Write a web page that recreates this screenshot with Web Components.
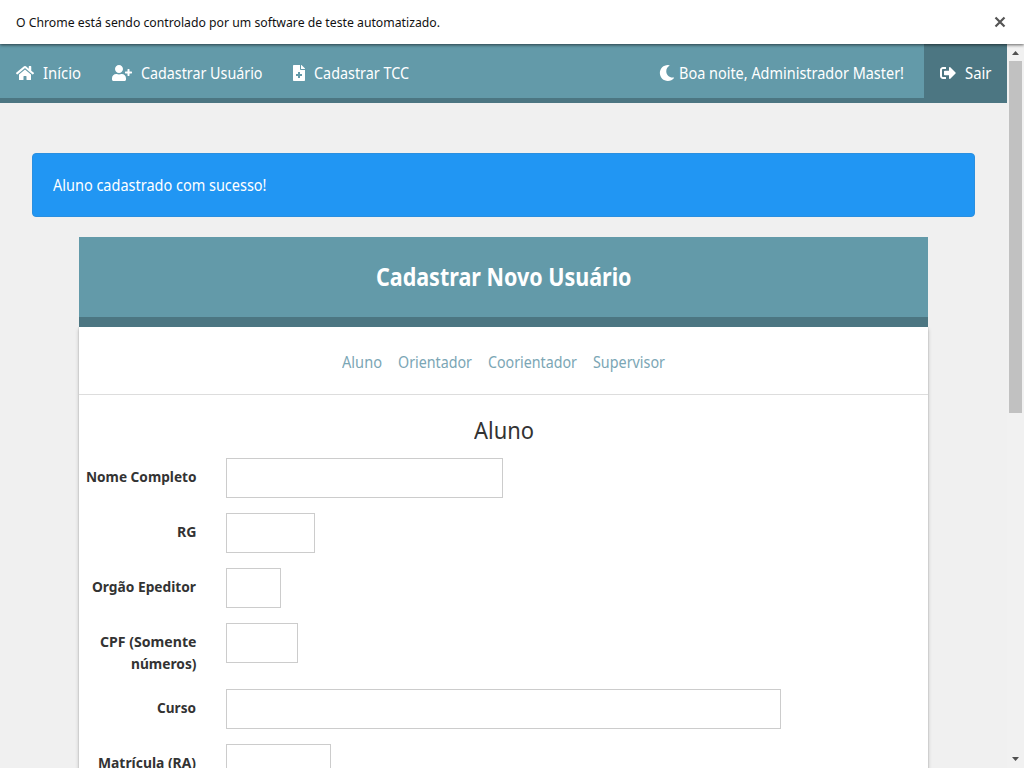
<!DOCTYPE html>
<html lang="pt-BR">
<head>
<meta charset="utf-8">
<title>Cadastrar Novo Usuário</title>
<style>
html,body{margin:0;height:100%;overflow:hidden}
body{background:#f0f0f0;color:#333;font:15.5px/22px "Noto Sans","Open Sans",sans-serif}
</style>
</head>
<body>
<app-window></app-window>
<script>
const define = (name, html, setup) => customElements.define(name, class extends HTMLElement {
  connectedCallback() {
    if (this.shadowRoot) return;
    const t = document.createElement('template');
    t.innerHTML = html;
    this.attachShadow({mode: 'open'}).append(t.content.cloneNode(true));
    if (setup) setup(this, this.shadowRoot);
  }
});

// Icon set: [viewBox width, path]
const ICONS = {
  home: [576, 'M280.37 148.26L96 300.11V464a16 16 0 0 0 16 16l112.06-.29a16 16 0 0 0 15.92-16V368a16 16 0 0 1 16-16h64a16 16 0 0 1 16 16v95.64a16 16 0 0 0 16 16.05L464 480a16 16 0 0 0 16-16V300L295.67 148.26a12.19 12.19 0 0 0-15.3 0zM571.6 251.47L488 182.56V44.05a12 12 0 0 0-12-12h-56a12 12 0 0 0-12 12v72.61L318.47 43a48 48 0 0 0-61 0L4.34 251.47a12 12 0 0 0-1.6 16.9l25.5 31A12 12 0 0 0 45.15 301l235.22-193.74a12.19 12.19 0 0 1 15.3 0L530.9 301a12 12 0 0 0 16.9-1.6l25.5-31a12 12 0 0 0-1.7-16.93z'],
  userPlus: [640, 'M624 208h-64v-64c0-8.8-7.2-16-16-16h-32c-8.8 0-16 7.2-16 16v64h-64c-8.8 0-16 7.2-16 16v32c0 8.8 7.2 16 16 16h64v64c0 8.8 7.2 16 16 16h32c8.8 0 16-7.2 16-16v-64h64c8.8 0 16-7.2 16-16v-32c0-8.8-7.2-16-16-16zm-400 48c70.7 0 128-57.3 128-128S294.7 0 224 0 96 57.3 96 128s57.3 128 128 128zm89.6 32h-16.7c-22.2 10.2-46.9 16-72.9 16s-50.6-5.8-72.9-16h-16.7C60.2 288 0 348.2 0 422.4V464c0 26.5 21.5 48 48 48h352c26.5 0 48-21.5 48-48v-41.6c0-74.2-60.2-134.4-134.4-134.4z'],
  file: [384, 'M377 105L279.1 7c-4.5-4.5-10.6-7-17-7H256v128h128v-6.1c0-6.3-2.5-12.4-7-16.9zm-153 31V0H24C10.7 0 0 10.7 0 24v464c0 13.3 10.7 24 24 24h336c13.3 0 24-10.7 24-24V160H248c-13.2 0-24-10.8-24-24zm64 160v48c0 4.4-3.6 8-8 8h-56v56c0 4.4-3.6 8-8 8h-48c-4.4 0-8-3.6-8-8v-56h-56c-4.4 0-8-3.6-8-8v-48c0-4.4 3.6-8 8-8h56v-56c0-4.4 3.6-8 8-8h48c4.4 0 8 3.6 8 8v56h56c4.4 0 8 3.6 8 8z'],
  moon: [512, 'M283.211 512c78.962 0 151.079-35.925 198.857-94.792 7.068-8.708-.639-21.43-11.562-19.35-124.203 23.654-238.262-71.576-238.262-196.954 0-72.222 38.662-138.635 101.498-174.394 9.686-5.512 7.25-20.197-3.756-22.23A258.156 258.156 0 0 0 283.211 0c-141.309 0-256 114.511-256 256 0 141.309 114.511 256 256 256z'],
  signOut: [512, 'M497 273L329 441c-15 15-41 4.5-41-17v-96H152c-13.3 0-24-10.7-24-24v-96c0-13.3 10.7-24 24-24h136V88c0-21.4 25.9-32 41-17l168 168c9.3 9.4 9.3 24.6 0 34zM192 436v-40c0-6.6-5.4-12-12-12H96c-17.7 0-32-14.3-32-32V160c0-17.7 14.3-32 32-32h84c6.6 0 12-5.4 12-12V76c0-6.6-5.4-12-12-12H96c-53 0-96 43-96 96v192c0 53 43 96 96 96h84c6.6 0 12-5.4 12-12z']
};

define('app-icon', `<style>:host{display:block;flex:none;height:16px}svg{display:block}</style>`, (el, root) => {
  const [w, d] = ICONS[el.getAttribute('name')];
  root.innerHTML += `<svg width="${w / 32}" height="16" viewBox="0 0 ${w} 512" fill="currentColor"><path d="${d}"/></svg>`;
});

// Text set to a fixed advance width
define('fit-text', `<style>:host{display:block;flex:none;height:var(--line,22px);white-space:nowrap}span{display:block;width:max-content;transform-origin:0 50%}</style><span><slot></slot></span>`, (el, root) => {
  const w = +el.getAttribute('w'), s = root.querySelector('span');
  el.style.width = w + 'px';
  s.style.transform = `scaleX(${w / s.getBoundingClientRect().width})`;
});

define('info-bar', `<style>
:host{display:flex;align-items:center;justify-content:space-between;flex:none;box-sizing:border-box;height:44px;padding:0 18px 0 16px;background:#fff;color:#111;font-size:12.5px;position:relative;z-index:2;box-shadow:0 1px 3px rgba(0,0,0,.6)}
::slotted(fit-text){padding-top:2px}
svg{display:block}</style>
<slot></slot><svg width="12" height="12" viewBox="0 0 12 12"><path d="M1.5 1.5l9 9M10.5 1.5l-9 9" stroke="#555" stroke-width="2.2"/></svg>`);

define('nav-item', `<style>
:host{display:flex;align-items:center;box-sizing:border-box;height:54px;gap:8.5px;padding:4px 16px 0}
:host([dark]){background:#4c7682}</style><slot></slot>`);

define('nav-bar', `<style>
:host{display:flex;height:54px;background:#639aa9;border-bottom:5px solid #4c7682;color:#fff}
.gap{flex:1}.hello{gap:4px;padding-right:20px}</style>
<nav-item><app-icon name="home"></app-icon><fit-text w="38">Início</fit-text></nav-item>
<nav-item style="padding-left:15.5px"><app-icon name="userPlus"></app-icon><fit-text w="121.500">Cadastrar Usuário</fit-text></nav-item>
<nav-item style="padding-left:14.5px;gap:9.5px"><app-icon name="file"></app-icon><fit-text w="95">Cadastrar TCC</fit-text></nav-item>
<div class="gap"></div>
<nav-item class="hello"><app-icon name="moon"></app-icon><fit-text w="225">Boa noite, Administrador Master!</fit-text></nav-item>
<nav-item dark><app-icon name="signOut"></app-icon><fit-text w="26.5">Sair</fit-text></nav-item>`);

define('alert-box', `<style>
:host{display:flex;align-items:center;box-sizing:border-box;height:64px;margin:50px 32px 20px;padding:0 20px;background:#2196f3;border:1px solid #2a8fe0;border-radius:4px;color:#fff}</style><slot></slot>`);

define('form-row', `<style>
:host{display:flex;margin-bottom:15px;align-items:flex-start}
.label{width:117px;padding:7px 0 0;display:flex;flex-direction:column;align-items:flex-end;font-weight:700;font-size:14.7px;margin-right:30px}
input{box-sizing:border-box;height:40px;margin:0;border:1px solid #ccc;background:#fff;border-radius:0;outline:0}</style>
<div class="label"><slot></slot></div><input type="text">`, (el, root) => {
  root.querySelector('input').style.width = el.getAttribute('field') + 'px';
});

define('user-card', `<style>
:host{display:block;width:849px;margin:0 auto}
header{--line:34px;display:flex;justify-content:center;align-items:center;box-sizing:border-box;height:90px;padding-bottom:2px;background:#639aa9;border-bottom:10px solid #4c7682;color:#fff;font-size:25px;font-weight:700;line-height:34px}
.body{height:800px;background:#fff;box-shadow:0 2px 4px rgba(0,0,0,.22),0 0 1px rgba(0,0,0,.3);clip-path:inset(0 -8px -8px -8px)}
nav{display:flex;justify-content:center;align-items:center;gap:16px;height:65px;padding-top:2px;border-bottom:1px solid #ddd;color:#7ba6b5}
h2{--line:35px;display:flex;justify-content:center;margin:18px 0 10px;font-size:23.2px;font-weight:400;line-height:35px}</style>
<header><fit-text w="255.500">Cadastrar Novo Usuário</fit-text></header>
<div class="body">
<nav><fit-text w="40">Aluno</fit-text><fit-text w="74">Orientador</fit-text><fit-text w="89">Coorientador</fit-text><fit-text w="72">Supervisor</fit-text></nav>
<h2><fit-text w="60">Aluno</fit-text></h2>
<form-row field="277"><fit-text w="110.5">Nome Completo</fit-text></form-row>
<form-row field="89"><fit-text w="19.5">RG</fit-text></form-row>
<form-row field="55"><fit-text w="104">Orgão Epeditor</fit-text></form-row>
<form-row field="72"><fit-text w="96.5">CPF (Somente</fit-text><fit-text w="65.5">números)</fit-text></form-row>
<form-row field="555"><fit-text w="39">Curso</fit-text></form-row>
<form-row field="105"><fit-text w="98">Matrícula (RA)</fit-text></form-row>
</div>`);

define('scroll-bar', `<style>
:host{display:flex;flex-direction:column;align-items:center;flex:none;width:17px;background:#f1f1f1}
svg{display:block;flex:none}.thumb{width:13px;height:352px;background:#c1c1c1}.rest{flex:1}</style>
<svg width="17" height="17"><path d="M5 11h7L8.500 7z" fill="#505050"/></svg><div class="thumb"></div><div class="rest"></div>
<svg width="17" height="17"><path d="M5 6h7L8.500 10z" fill="#505050"/></svg>`);

define('app-window', `<style>
:host{display:flex;flex-direction:column;height:100vh;overflow:hidden}
.view{display:flex;flex:1;min-height:0}main{flex:1;min-width:0;overflow:hidden;background:#f0f0f0}</style>
<info-bar><fit-text w="424">O Chrome está sendo controlado por um software de teste automatizado.</fit-text></info-bar>
<div class="view"><main><nav-bar></nav-bar><alert-box><fit-text w="213.500">Aluno cadastrado com sucesso!</fit-text></alert-box><user-card></user-card></main><scroll-bar></scroll-bar></div>`);
</script>
</body>
</html>
